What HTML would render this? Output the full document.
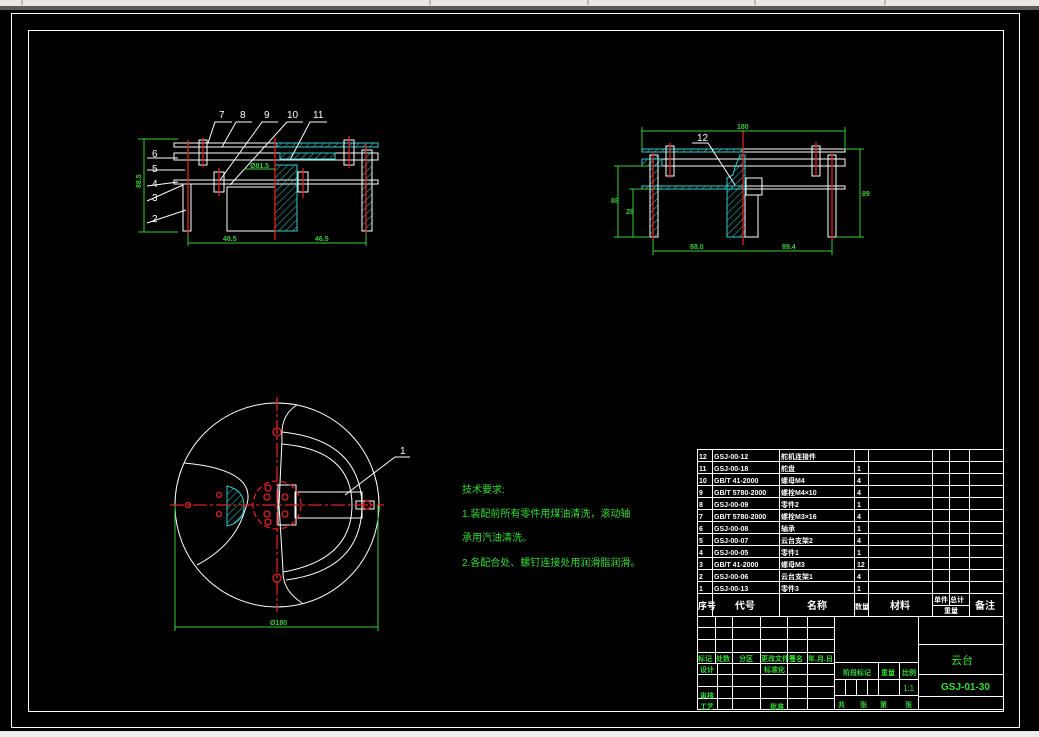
<!DOCTYPE html>
<html><head><meta charset="utf-8"><style>
html,body{margin:0;padding:0;background:#000;width:1039px;height:737px;overflow:hidden}
svg{display:block}
text{font-family:"Liberation Sans","Noto Sans CJK SC",sans-serif}
</style></head><body>
<svg width="1039" height="737" viewBox="0 0 1039 737" xmlns="http://www.w3.org/2000/svg">
<defs>
<pattern id="h" width="5" height="5" patternUnits="userSpaceOnUse" patternTransform="rotate(45)">
<line x1="0" y1="0" x2="0" y2="5" stroke="#3cc" stroke-width="1"/></pattern>
</defs>
<rect width="1039" height="737" fill="#000"/>
<!-- top toolbar -->
<rect x="0" y="0" width="1039" height="6" fill="#ece9e4"/>
<rect x="0" y="6" width="1039" height="4" fill="#5a5a5a"/>
<line x1="22" y1="0" x2="22" y2="5" stroke="#888"/><line x1="430" y1="0" x2="430" y2="5" stroke="#888"/>
<line x1="588" y1="0" x2="588" y2="5" stroke="#888"/><line x1="755" y1="0" x2="755" y2="5" stroke="#888"/>
<line x1="885" y1="0" x2="885" y2="5" stroke="#888"/>
<!-- bottom strip -->
<rect x="0" y="731" width="1039" height="6" fill="#ececec"/>
<!-- frames -->
<rect x="11.5" y="13.5" width="1008" height="714" fill="none" stroke="#fff"/>
<rect x="28.5" y="30.5" width="975" height="681" fill="none" stroke="#fff"/>

<g stroke="#fff" fill="none" stroke-width="1">
<!-- ============ front view top-left ============ -->
<rect x="174" y="143" width="103" height="4"/>
<rect x="277" y="143" width="101" height="4" fill="url(#h)" stroke="#3cc"/>
<rect x="174" y="153" width="204" height="7"/>
<rect x="280" y="153" width="55" height="6" fill="url(#h)" stroke="#3cc"/>
<rect x="174" y="180" width="204" height="4"/>
<rect x="183" y="184" width="8" height="47"/>
<rect x="227" y="187" width="48" height="44"/>
<rect x="275" y="165" width="22" height="66" fill="url(#h)" stroke="#3cc"/>
<rect x="362" y="150" width="10" height="81" fill="url(#h)" stroke="#fff"/>
<rect x="199" y="140" width="8" height="25"/><rect x="214" y="172" width="10" height="20"/>
<rect x="298" y="172" width="10" height="20"/><rect x="344" y="140" width="10" height="25"/>
<polyline points="155,158 174,158"/>
<!-- leaders -->
<polyline points="208,143 215,122 232,122"/><polyline points="222,147 236,122 252,122"/>
<polyline points="220,180 262,122 278,122"/><polyline points="230,185 287,122 303,122"/>
<polyline points="290,160 310,122 327,122"/>
<polyline points="147,158 178,158"/><polyline points="147,170 185,170"/><polyline points="147,186 178,182"/>
<polyline points="147,201 183,185"/><polyline points="147,223 186,210"/>
<!-- ============ side view top-right ============ -->
<rect x="642" y="149" width="203" height="3"/>
<rect x="642" y="149" width="100" height="3" fill="url(#h)" stroke="#3cc"/>
<rect x="642" y="159" width="203" height="7"/>
<rect x="642" y="159" width="20" height="7" fill="url(#h)" stroke="#3cc"/>
<rect x="642" y="186" width="203" height="3"/>
<rect x="642" y="186" width="100" height="3" fill="url(#h)" stroke="#3cc"/>
<rect x="650" y="155" width="8" height="82" fill="url(#h)" stroke="#fff"/>
<polygon points="727,178 733,175 735,167 740,155 745,155 745,237 727,237" fill="url(#h)" stroke="#3cc"/>
<rect x="745" y="195" width="13" height="42"/>
<rect x="746" y="178" width="16" height="17"/>
<rect x="828" y="155" width="8" height="82"/>
<rect x="666" y="146" width="8" height="30"/><rect x="812" y="146" width="8" height="30"/>
<polyline points="692,143 708,143 735,185"/>
<!-- ============ plan view ============ -->
<circle cx="277" cy="505" r="102"/>
<path d="M184,463 Q262,470 245,510 Q235,545 197,565"/>
<path d="M297,405 Q280,415 282,440 L279,505 L283,570 Q282,590 302,603"/>
<path d="M282,444 Q352,450 352,505 Q352,560 283,572"/>
<path d="M282,432 Q360,440 362,505 Q362,570 286,580"/>
<rect x="295" y="492" width="67" height="26"/>
<rect x="278" y="485" width="18" height="40"/>
<path d="M227,486 Q244,490 244,506 Q244,522 227,526 Z" fill="url(#h)" stroke="#3cc"/>
<rect x="356" y="501" width="18" height="8"/>
<polyline points="345,495 395,457 410,457"/>
</g>
<!-- red centre lines -->
<g stroke="#d22" stroke-width="1.3" fill="none">
<line x1="188" y1="140" x2="188" y2="234"/><line x1="275" y1="138" x2="275" y2="240"/>
<line x1="366" y1="144" x2="366" y2="234"/><line x1="203" y1="138" x2="203" y2="167"/>
<line x1="219" y1="168" x2="219" y2="196"/><line x1="303" y1="168" x2="303" y2="198"/>
<line x1="349" y1="136" x2="349" y2="168"/>
<line x1="653" y1="153" x2="653" y2="240"/><line x1="670" y1="143" x2="670" y2="178"/>
<line x1="743" y1="130" x2="743" y2="245"/><line x1="816" y1="142" x2="816" y2="176"/>
<line x1="832" y1="152" x2="832" y2="240"/>
<line x1="170" y1="505" x2="384" y2="505" stroke-dasharray="14,3,3,3"/>
<line x1="277" y1="397" x2="277" y2="612" stroke-dasharray="14,3,3,3"/>
<circle cx="277" cy="505" r="24" stroke-dasharray="6,3"/>
<circle cx="277" cy="432" r="4"/><circle cx="277" cy="578" r="4"/>
<circle cx="268" cy="488" r="3"/><circle cx="268" cy="522" r="3"/>
<circle cx="267" cy="497" r="3"/><circle cx="285" cy="497" r="3"/><circle cx="267" cy="514" r="3"/><circle cx="285" cy="514" r="3"/>
<circle cx="367" cy="505" r="4"/><circle cx="188" cy="505" r="2.5"/>
<circle cx="219" cy="495" r="2.5"/><circle cx="219" cy="514" r="2.5"/>
</g>
<!-- green dimensions -->
<g stroke="#3c3" fill="none" stroke-width="1">
<polyline points="138,139 178,139"/><polyline points="138,232 178,232"/><line x1="144" y1="139" x2="144" y2="232"/>
<line x1="188" y1="243" x2="366" y2="243"/><line x1="188" y1="234" x2="188" y2="246"/><line x1="366" y1="234" x2="366" y2="246"/>
<line x1="244" y1="169" x2="275" y2="169"/>
<line x1="642" y1="131" x2="845" y2="131"/><line x1="642" y1="127" x2="642" y2="149"/><line x1="845" y1="127" x2="845" y2="149"/>
<line x1="653" y1="251" x2="832" y2="251"/><line x1="653" y1="240" x2="653" y2="255"/><line x1="832" y1="240" x2="832" y2="255"/>
<line x1="860" y1="149" x2="860" y2="237"/><line x1="845" y1="149" x2="864" y2="149"/><line x1="836" y1="237" x2="864" y2="237"/>
<line x1="618" y1="166" x2="618" y2="237"/><line x1="614" y1="166" x2="650" y2="166"/><line x1="614" y1="237" x2="650" y2="237"/>
<line x1="633" y1="189" x2="633" y2="237"/><line x1="629" y1="189" x2="650" y2="189"/>
<line x1="175" y1="505" x2="175" y2="631"/><line x1="378" y1="505" x2="378" y2="631"/><line x1="175" y1="627" x2="378" y2="627"/>
</g>
<g fill="#3c3" font-size="7" font-weight="bold">
<text x="137" y="192" transform="rotate(-90 137 188)">88.5</text>
<text x="223" y="241">48.5</text><text x="315" y="241">46.5</text>
<text x="250" y="168">Ø81.5</text>
<text x="737" y="129">180</text><text x="690" y="249">88.0</text><text x="782" y="249">89.4</text>
<text x="862" y="196">89</text><text x="611" y="203">88</text><text x="626" y="214">28</text>
<text x="270" y="625">Ø180</text>
</g>
<g fill="#fff" font-size="10">
<text x="219" y="118">7</text><text x="240" y="118">8</text><text x="264" y="118">9</text><text x="287" y="118">10</text><text x="313" y="118">11</text>
<text x="152" y="157">6</text><text x="152" y="172">5</text><text x="152" y="187">4</text><text x="152" y="201">3</text><text x="152" y="222">2</text>
<text x="697" y="141">12</text><text x="400" y="454">1</text>
</g>
<!-- technical requirements -->
<g fill="#3d3" font-size="10" font-family="'Noto Sans CJK SC',sans-serif">
<text x="462" y="493">技术要求:</text>
<text x="462" y="517">1.装配前所有零件用煤油清洗，滚动轴</text>
<text x="462" y="541">承用汽油清洗。</text>
<text x="462" y="566">2.各配合处、螺钉连接处用润滑脂润滑。</text>
</g>
<!-- parts list -->
<g stroke="#fff" fill="none" stroke-width="1">
<rect x="697.5" y="449.5" width="306" height="260"/>
<line x1="697" y1="461.5" x2="1003" y2="461.5"/><line x1="697" y1="473.5" x2="1003" y2="473.5"/>
<line x1="697" y1="485.5" x2="1003" y2="485.5"/><line x1="697" y1="497.5" x2="1003" y2="497.5"/>
<line x1="697" y1="509.5" x2="1003" y2="509.5"/><line x1="697" y1="521.5" x2="1003" y2="521.5"/>
<line x1="697" y1="533.5" x2="1003" y2="533.5"/><line x1="697" y1="545.5" x2="1003" y2="545.5"/>
<line x1="697" y1="557.5" x2="1003" y2="557.5"/><line x1="697" y1="569.5" x2="1003" y2="569.5"/>
<line x1="697" y1="581.5" x2="1003" y2="581.5"/><line x1="697" y1="593.5" x2="1003" y2="593.5"/>
<line x1="697" y1="616.5" x2="1003" y2="616.5"/>
<line x1="712.5" y1="449" x2="712.5" y2="616"/><line x1="779.5" y1="449" x2="779.5" y2="616"/>
<line x1="854.5" y1="449" x2="854.5" y2="616"/><line x1="868.5" y1="449" x2="868.5" y2="616"/>
<line x1="932.5" y1="449" x2="932.5" y2="616"/><line x1="949.5" y1="449" x2="949.5" y2="605"/>
<line x1="969.5" y1="449" x2="969.5" y2="616"/><line x1="932" y1="605.5" x2="969" y2="605.5"/>
<!-- lower -->
<line x1="697" y1="627.5" x2="834" y2="627.5"/><line x1="697" y1="639.5" x2="834" y2="639.5"/>
<line x1="697" y1="652.5" x2="834" y2="652.5"/><line x1="697" y1="663.5" x2="834" y2="663.5"/>
<line x1="697" y1="674.5" x2="834" y2="674.5"/><line x1="697" y1="686.5" x2="834" y2="686.5"/>
<line x1="697" y1="698.5" x2="834" y2="698.5"/>
<line x1="715.5" y1="616" x2="715.5" y2="663"/><line x1="732.5" y1="616" x2="732.5" y2="710"/>
<line x1="760.5" y1="616" x2="760.5" y2="710"/><line x1="787.5" y1="616" x2="787.5" y2="710"/>
<line x1="807.5" y1="616" x2="807.5" y2="710"/><line x1="717.5" y1="663" x2="717.5" y2="710"/>
<line x1="834.5" y1="616" x2="834.5" y2="710"/><line x1="918.5" y1="616" x2="918.5" y2="710"/>
<line x1="834" y1="662.5" x2="918" y2="662.5"/><line x1="834" y1="679.5" x2="918" y2="679.5"/>
<line x1="834" y1="695.5" x2="918" y2="695.5"/>
<line x1="878.5" y1="662" x2="878.5" y2="695"/><line x1="899.5" y1="662" x2="899.5" y2="695"/>
<line x1="845.5" y1="679" x2="845.5" y2="695"/><line x1="856.5" y1="679" x2="856.5" y2="695"/><line x1="867.5" y1="679" x2="867.5" y2="695"/>
<line x1="918" y1="644.5" x2="1003" y2="644.5"/><line x1="918" y1="674.5" x2="1003" y2="674.5"/>
<line x1="918" y1="696.5" x2="1003" y2="696.5"/>
</g>
<g fill="#fff" font-size="7" font-family="'Liberation Sans','Noto Sans CJK SC',sans-serif" font-weight="bold">
<text x="699" y="459">12</text><text x="714" y="459">GSJ-00-12</text><text x="781" y="459">舵机连接件</text>
<text x="699" y="471">11</text><text x="714" y="471">GSJ-00-18</text><text x="781" y="471">舵盘</text><text x="857" y="471">1</text>
<text x="699" y="483">10</text><text x="714" y="483">GB/T 41-2000</text><text x="781" y="483">螺母M4</text><text x="857" y="483">4</text>
<text x="699" y="495">9</text><text x="714" y="495">GB/T 5780-2000</text><text x="781" y="495">螺栓M4×10</text><text x="857" y="495">4</text>
<text x="699" y="507">8</text><text x="714" y="507">GSJ-00-09</text><text x="781" y="507">零件2</text><text x="857" y="507">1</text>
<text x="699" y="519">7</text><text x="714" y="519">GB/T 5780-2000</text><text x="781" y="519">螺栓M3×16</text><text x="857" y="519">4</text>
<text x="699" y="531">6</text><text x="714" y="531">GSJ-00-08</text><text x="781" y="531">轴承</text><text x="857" y="531">1</text>
<text x="699" y="543">5</text><text x="714" y="543">GSJ-00-07</text><text x="781" y="543">云台支架2</text><text x="857" y="543">4</text>
<text x="699" y="555">4</text><text x="714" y="555">GSJ-00-05</text><text x="781" y="555">零件1</text><text x="857" y="555">1</text>
<text x="699" y="567">3</text><text x="714" y="567">GB/T 41-2000</text><text x="781" y="567">螺母M3</text><text x="857" y="567">12</text>
<text x="699" y="579">2</text><text x="714" y="579">GSJ-00-06</text><text x="781" y="579">云台支架1</text><text x="857" y="579">4</text>
<text x="699" y="591">1</text><text x="714" y="591">GSJ-00-13</text><text x="781" y="591">零件3</text><text x="857" y="591">1</text>
</g>
<g fill="#fff" font-size="10" font-family="'Noto Sans CJK SC',sans-serif" font-weight="bold">
<text x="698" y="609" font-size="9">序号</text><text x="735" y="609">代号</text><text x="807" y="609">名称</text>
<text x="855" y="609" font-size="7">数量</text><text x="890" y="609">材料</text>
<text x="934" y="602" font-size="7">单件 总计</text><text x="944" y="613" font-size="7">重量</text><text x="975" y="609">备注</text>
</g>
<g fill="#3d3" font-size="7" font-family="'Noto Sans CJK SC',sans-serif" font-weight="bold">
<text x="698" y="661">标记</text><text x="716" y="661">处数</text><text x="739" y="661">分区</text><text x="761" y="661">更改文件号</text>
<text x="789" y="661">签名</text><text x="808" y="661">年.月.日</text>
<text x="700" y="672">设计</text><text x="764" y="672">标准化</text>
<text x="700" y="698">审核</text><text x="700" y="709">工艺</text><text x="770" y="709">批准</text>
<text x="843" y="675">阶段标记</text><text x="881" y="675">重量</text><text x="902" y="675">比例</text>
<text x="903" y="691" font-size="8" font-weight="normal">1:1</text>
<text x="838" y="707">共</text><text x="860" y="707">张</text><text x="880" y="707">第</text><text x="905" y="707">张</text>
<text x="951" y="664" font-size="11" font-weight="normal">云台</text>
<text x="941" y="690" font-size="10" font-family="'Liberation Sans',sans-serif">GSJ-01-30</text>
</g>
</svg>
</body></html>
